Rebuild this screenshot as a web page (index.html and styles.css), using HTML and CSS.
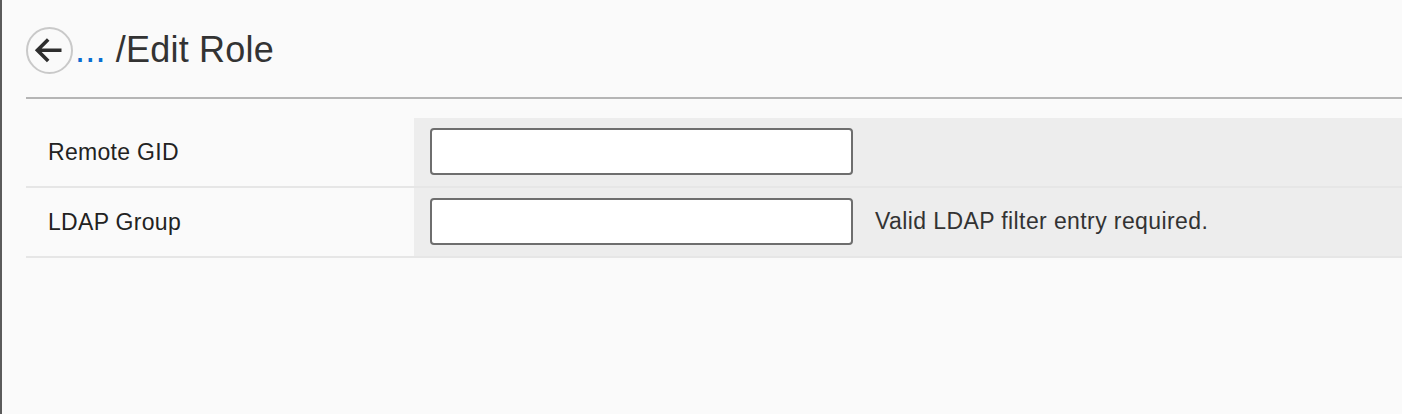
FILE: index.html
```html
<!DOCTYPE html>
<html lang="en">
<head>
<meta charset="utf-8">
<title>Edit Role</title>
<link rel="stylesheet" href="styles.css">
</head>
<body>
<div class="frame">
  <main class="page">
    <header class="header">
      <button class="back" type="button" aria-label="Back">
        <svg width="47" height="47" viewBox="0 0 47 47">
          <circle cx="23.5" cy="23.5" r="22.5" fill="none" stroke="#c9c9c9" stroke-width="2"/>
          <path d="M35.5 23.2H12.5 M22.2 12.4 L11.4 23.2 L22.2 34" fill="none" stroke="#2e2e2e" stroke-width="3.6"/>
        </svg>
      </button>
      <h1 class="title"><span class="crumb">...</span> /Edit Role</h1>
    </header>
    <section class="form">
      <div class="row">
        <div class="label">Remote GID</div>
        <div class="value"><input class="field" type="text"></div>
      </div>
      <div class="row">
        <div class="label">LDAP Group</div>
        <div class="value"><input class="field" type="text"><span class="hint">Valid LDAP filter entry required.</span></div>
      </div>
    </section>
  </main>
</div>
</body>
</html>
```
FILE: styles.css
```css
html, body {
  margin: 0;
  padding: 0;
  background: #fafafa;
}
body {
  font-family: "Liberation Sans", Arial, sans-serif;
  color: #333;
}
.frame {
  border-left: 2px solid #5b5b5b;
  min-height: 414px;
  box-sizing: border-box;
  padding-left: 24px;
}
.page {
  display: flex;
  flex-direction: column;
}
.header {
  display: flex;
  align-items: center;
  height: 99px;
  padding-top: 3px;
  box-sizing: border-box;
  border-bottom: 2px solid #b5b5b5;
  gap: 2px;
}
.back {
  width: 47px;
  height: 47px;
  padding: 0;
  margin: 0;
  border: 0;
  background: none;
  display: flex;
}
.title {
  margin: 0;
  font-size: 36px;
  line-height: 36px;
  font-weight: normal;
  letter-spacing: 0.2px;
  color: #333;
  padding-bottom: 1px;
}
.crumb {
  color: #0a6ed1;
}
.form {
  margin-top: 19px;
  display: flex;
  flex-direction: column;
}
.row {
  display: flex;
  height: 70px;
  box-sizing: border-box;
  border-bottom: 2px solid #e6e6e6;
}
.label {
  width: 388px;
  flex: none;
  box-sizing: border-box;
  padding-left: 22px;
  display: flex;
  align-items: center;
  font-size: 23px;
  letter-spacing: 0.3px;
  color: #222;
}
.value {
  flex: 1;
  background: #ededed;
  display: flex;
  align-items: center;
  padding-left: 16px;
  padding-bottom: 1px;
}
.field {
  width: 423px;
  height: 47px;
  box-sizing: border-box;
  border: 2px solid #6e6e6e;
  border-radius: 4px;
  background: #fff;
  margin: 0;
  font: inherit;
}
.hint {
  margin-left: 22px;
  font-size: 23px;
  letter-spacing: 0.4px;
  color: #333;
}
```
